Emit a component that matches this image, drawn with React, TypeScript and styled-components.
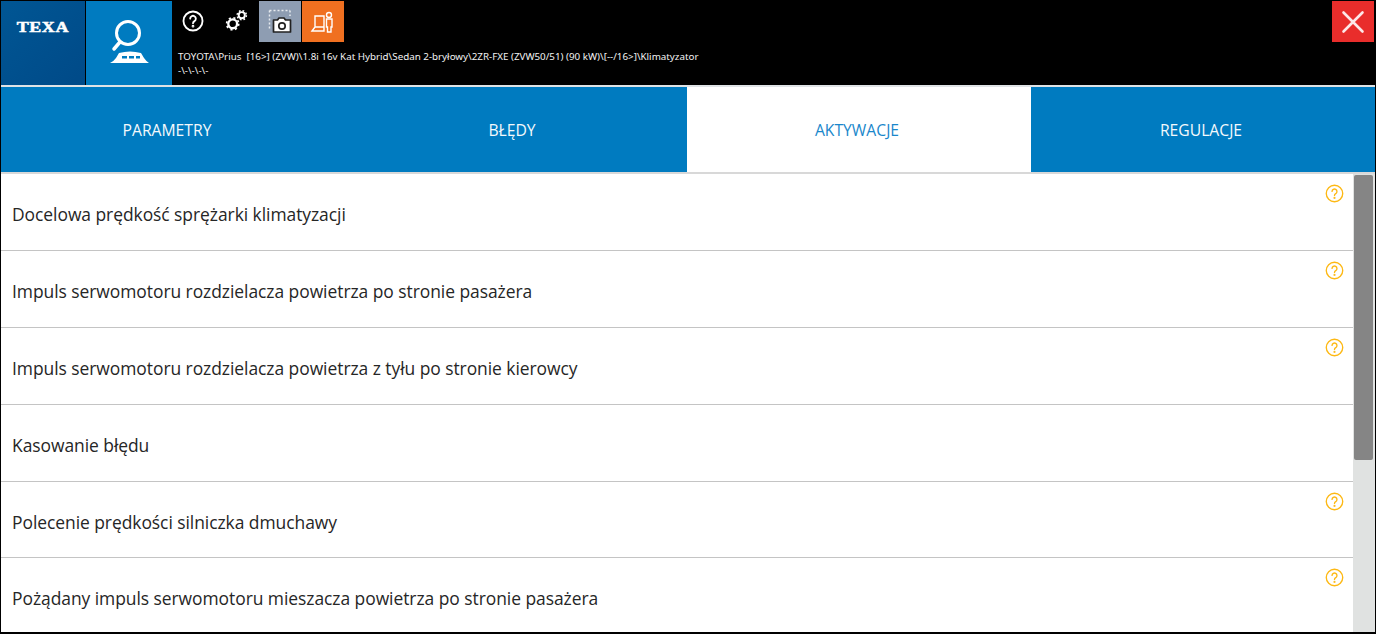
import React from "react";
import styled, { createGlobalStyle } from "styled-components";

const Global = createGlobalStyle`
  html, body { margin: 0; padding: 0; background: #000; }
  body { width: 1376px; height: 634px; overflow: hidden; font-family: "Open Sans", "Noto Sans", sans-serif; }
`;

const Frame = styled.div`
  width: 1376px;
  height: 634px;
  box-sizing: border-box;
  background: #000;
  padding: 0 1px 2px 1px;
  display: flex;
  flex-direction: column;
  overflow: hidden;
`;

const Header = styled.header`
  height: 85px;
  padding-top: 1px;
  box-sizing: border-box;
  display: flex;
  flex: none;
`;

const LogoTile = styled.div`
  width: 84px;
  height: 84px;
  background: linear-gradient(135deg, #005694, #004a88);
  display: flex;
  justify-content: center;
  padding-top: 17px;
  box-sizing: border-box;
`;

const LogoText = styled.span`
  color: #fff;
  font-family: "Liberation Serif", serif;
  font-weight: 700;
  font-size: 15px;
  line-height: 18px;
  letter-spacing: 0.5px;
  transform: scaleX(1.2);
  -webkit-text-stroke: 0.5px #fff;
`;

const ModeTile = styled.div`
  width: 86px;
  height: 84px;
  margin-left: 1px;
  background: #007bc0;
  display: flex;
`;

const HeaderMain = styled.div`
  flex: 1;
  padding-left: 6px;
  display: flex;
  flex-direction: column;
`;

const Tools = styled.div`
  display: flex;
  height: 41px;
  align-items: stretch;
`;

const PlainTool = styled.div<{ $w: number; $inset?: number }>`
  width: ${(p) => p.$w}px;
  padding-left: ${(p) => p.$inset ?? 0}px;
  padding-bottom: 2px;
  box-sizing: border-box;
  display: flex;
  align-items: center;
  justify-content: center;
`;

const SquareTool = styled.div<{ $bg: string }>`
  width: 42px;
  height: 41px;
  margin-right: 1px;
  background: ${(p) => p.$bg};
  display: flex;
`;

const PathBlock = styled.div`
  padding-top: 8px;
`;

const PathLine = styled.div`
  color: #f2f2f2;
  font-family: "Noto Sans", sans-serif;
  font-size: 9.8px;
  line-height: 14px;
  white-space: pre;
`;

const CloseButton = styled.button`
  width: 42px;
  height: 41px;
  margin: 0 1px 0 0;
  padding: 0;
  border: 0;
  background: #e92d2b;
  display: flex;
  align-items: center;
  justify-content: center;
  flex: none;
`;

const Tabs = styled.nav`
  height: 89px;
  flex: none;
  box-sizing: border-box;
  border-top: 2px solid #dfe3e6;
  border-bottom: 2px solid #d8d8d8;
  display: grid;
  grid-template-columns: 343px 343px 344px 344px;
  background: #007bc0;
`;

const Tab = styled.div<{ $active?: boolean; $inset: number }>`
  display: flex;
  align-items: center;
  justify-content: center;
  padding-right: ${(p) => p.$inset}px;
  padding-top: 1px;
  font-size: 15.7px;
  color: ${(p) => (p.$active ? "#1a87cb" : "#f4f9fc")};
  background: ${(p) => (p.$active ? "#fff" : "transparent")};
`;

const Body = styled.div`
  flex: 1;
  min-height: 0;
  display: flex;
  background: #fff;
`;

const List = styled.div`
  flex: 1;
  min-width: 0;
  overflow: hidden;
`;

const Row = styled.div`
  height: 76.9px;
  box-sizing: border-box;
  border-bottom: 1px solid #c4c4c4;
  padding: 10px 9px 0 11px;
  display: flex;
  justify-content: space-between;
  align-items: flex-start;
  color: #262626;
  &:last-child { border-bottom: 0; }
`;

const RowLabel = styled.span`
  font-size: 17.45px;
  line-height: 24px;
  margin-top: 18px;
  letter-spacing: -0.05px;
`;

const Track = styled.div`
  width: 22px;
  flex: none;
  background: #e0e2e1;
  padding: 1px 2px 0 1px;
  box-sizing: border-box;
`;

const Thumb = styled.div`
  height: 285px;
  border-radius: 2px;
  background: #858585;
`;

const Help = ({ c = "#fff", s = 24, w = 2 }: { c?: string; s?: number; w?: number }) => (
  <svg width={s} height={s} viewBox="0 0 24 24" fill="none" stroke={c} strokeWidth={w} strokeLinecap="round">
    <circle cx="12" cy="12" r="10.4" />
    <path d="M8.9 9.4a3.1 3.1 0 1 1 4.7 2.7c-1 .6-1.6 1.200-1.600 2.300" />
    <circle cx="12" cy="17.600" r="0.500" fill={c} />
  </svg>
);

const Gears = () => (
  <svg width="23" height="23" viewBox="0 0 24 24" fill="none" stroke="#fff">
    <circle cx="8" cy="15.500" r="4.600" strokeWidth="2.400" />
    <circle cx="8" cy="15.500" r="6.300" strokeWidth="1.800" strokeDasharray="2.200 2.750" />
    <circle cx="17.500" cy="6.500" r="3.200" strokeWidth="2" />
    <circle cx="17.500" cy="6.500" r="4.800" strokeWidth="1.600" strokeDasharray="1.800 2" />
  </svg>
);

const Camera = () => (
  <svg width="42" height="41" viewBox="0 0 42 41" fill="none">
    <path d="M10.500 9.500H31M10.500 9.500V28M31 9.500V15" stroke="#e7ebf0" strokeWidth="1.500" strokeDasharray="2 2" />
    <path d="M14.500 19h4l1.500-2h5l1.500 2h5v12h-17z" fill="#fff" stroke="#222" strokeWidth="1.700" strokeLinejoin="round" />
    <circle cx="23" cy="25" r="3.200" fill="#fff" stroke="#222" strokeWidth="1.700" />
  </svg>
);

const Tech = () => (
  <svg width="42" height="41" viewBox="0 0 42 41" fill="none" stroke="#fff" strokeWidth="1.400">
    <path d="M13 15h9v11h-9zM10 30l3-4h9v4z" />
    <circle cx="27" cy="14" r="2.500" />
    <path d="M24.500 18h5.500v8h-1v5h-3.500v-5h-1z" />
  </svg>
);

const Mode = () => (
  <svg width="86" height="84" viewBox="0 0 86 84" fill="none" stroke="#fff">
    <circle cx="42" cy="32" r="11.500" strokeWidth="3" />
    <path d="M34 41L28 48" strokeWidth="3.500" strokeLinecap="round" />
    <path d="M33 52Q44 49 55 52L58 57Q60 60 63 62H24Q28 60 30 57Z" fill="#fff" stroke="none" />
    <path d="M36 55h5v2.500h-5zM43 55h5v2.500h-5zM50 55h4v2.500h-4z" fill="#007bc0" stroke="none" />
  </svg>
);

const X = () => (
  <svg width="24" height="24" viewBox="0 0 24 24" stroke="#fde8e8" strokeWidth="2.600" strokeLinecap="round">
    <path d="M2.500 2.500l19 19M21.500 2.500l-19 19" />
  </svg>
);

const rows = [
  { label: "Docelowa prędkość sprężarki klimatyzacji", help: true },
  { label: "Impuls serwomotoru rozdzielacza powietrza po stronie pasażera", help: true },
  { label: "Impuls serwomotoru rozdzielacza powietrza z tyłu po stronie kierowcy", help: true },
  { label: "Kasowanie błędu", help: false },
  { label: "Polecenie prędkości silniczka dmuchawy", help: true },
  { label: "Pożądany impuls serwomotoru mieszacza powietrza po stronie pasażera", help: true },
];

export default function App() {
  return (
    <Frame>
      <Global />
      <Header>
        <LogoTile><LogoText>TEXA</LogoText></LogoTile>
        <ModeTile><Mode /></ModeTile>
        <HeaderMain>
          <Tools>
            <PlainTool $w={30}><Help s={22} /></PlainTool>
            <PlainTool $w={51} $inset={5}><Gears /></PlainTool>
            <SquareTool $bg="#8e9db2"><Camera /></SquareTool>
            <SquareTool $bg="#f07020"><Tech /></SquareTool>
          </Tools>
          <PathBlock>
            <PathLine>TOYOTA\Prius  [16&gt;] (ZVW)\1.8i 16v Kat Hybrid\Sedan 2-bryłowy\2ZR-FXE (ZVW50/51) (90 kW)\[--/16&gt;]\Klimatyzator</PathLine>
            <PathLine>-\-\-\-\-</PathLine>
          </PathBlock>
        </HeaderMain>
        <CloseButton aria-label="Zamknij"><X /></CloseButton>
      </Header>
      <Tabs>
        <Tab $inset={11}>PARAMETRY</Tab>
        <Tab $inset={7}>BŁĘDY</Tab>
        <Tab $active $inset={4}>AKTYWACJE</Tab>
        <Tab $inset={4}>REGULACJE</Tab>
      </Tabs>
      <Body>
        <List>
          {rows.map((r) => (
            <Row key={r.label}>
              <RowLabel>{r.label}</RowLabel>
              {r.help && <Help c="#fdb813" s={19} w={1.7} />}
            </Row>
          ))}
        </List>
        <Track><Thumb /></Track>
      </Body>
    </Frame>
  );
}
